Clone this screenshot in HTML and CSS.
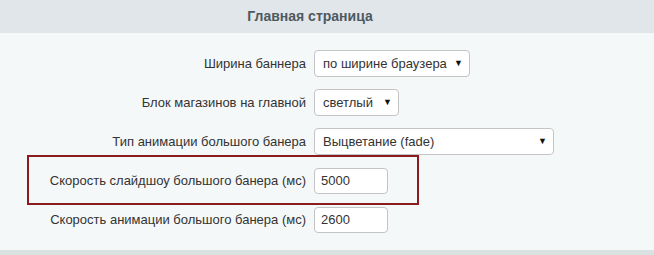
FILE: index.html
```html
<!DOCTYPE html>
<html lang="ru">
<head>
    <meta charset="UTF-8">
    <title>Главная страница</title>
    <link rel="stylesheet" href="styles.css">
</head>
<body>
    <div class="panel">
        <div class="panel-title">Главная страница</div>
        <div class="panel-body">
            <div class="row">
                <label class="row-label" for="banner-width">Ширина баннера</label>
                <div class="select-wrap w-156">
                    <select id="banner-width">
                        <option>по ширине браузера</option>
                    </select>
                    <span class="arrow">&#9660;</span>
                </div>
            </div>
            <div class="row">
                <label class="row-label" for="shops-block">Блок магазинов на главной</label>
                <div class="select-wrap w-85">
                    <select id="shops-block">
                        <option>светлый</option>
                    </select>
                    <span class="arrow">&#9660;</span>
                </div>
            </div>
            <div class="row">
                <label class="row-label" for="banner-anim">Тип анимации большого банера</label>
                <div class="select-wrap w-240">
                    <select id="banner-anim">
                        <option>Выцветание (fade)</option>
                    </select>
                    <span class="arrow">&#9660;</span>
                </div>
            </div>
            <!-- выделенная строка -->
            <div class="row highlight">
                <label class="row-label" for="slide-speed">Скорость слайдшоу большого банера (мс)</label>
                <input type="text" id="slide-speed" class="text-input" value="5000">
            </div>
            <div class="row">
                <label class="row-label" for="anim-speed">Скорость анимации большого банера (мс)</label>
                <input type="text" id="anim-speed" class="text-input" value="2600">
            </div>
        </div>
        <div class="panel-footer"></div>
    </div>
</body>
</html>
```

FILE: styles.css
```css
html, body {
    margin: 0;
    padding: 0;
}
body {
    background-color: #f5f8f9;
    color: #333;
    font-family: "Liberation Sans", Arial, sans-serif;
    font-size: 13px;
}
.panel-title {
    height: 33px;
    line-height: 33px;
    padding-right: 34px;
    background-color: #e1e6eb;
    color: #4e595f;
    font-weight: bold;
    font-size: 14px;
    text-align: center;
}
.panel-body {
    padding: 17px 0 17px 0;
    display: flex;
    flex-direction: column;
    gap: 12px;
}
.row {
    position: relative;
    display: flex;
    align-items: center;
    height: 27px;
}
.row-label {
    width: 314px;
    padding-right: 8px;
    text-align: right;
    box-sizing: border-box;
    flex-shrink: 0;
    font-size: 13px;
}
.highlight::before {
    content: "";
    position: absolute;
    left: 27px;
    top: -12px;
    width: 392px;
    height: 50px;
    border: 2px solid #8c1c1c;
    box-sizing: border-box;
}
.select-wrap {
    position: relative;
    height: 27px;
}
.select-wrap select {
    appearance: none;
    -webkit-appearance: none;
    width: 100%;
    height: 27px;
    padding: 0 16px 0 8px;
    border: 1px solid #c4c4c4;
    border-radius: 4px;
    background-color: #fff;
    color: #333;
    font-family: inherit;
    font-size: 13px;
    box-sizing: border-box;
}
.arrow {
    position: absolute;
    right: 7px;
    top: 8px;
    font-size: 9px;
    color: #111;
    pointer-events: none;
}
.w-156 { width: 156px; }
.w-85 { width: 85px; }
.w-240 { width: 240px; }
.text-input {
    width: 74px;
    height: 26px;
    padding: 0 6px;
    border: 1px solid #c4c4c4;
    border-radius: 4px;
    background-color: #fff;
    color: #333;
    font-family: inherit;
    font-size: 13px;
    box-sizing: border-box;
}
.panel-footer {
    height: 5px;
    background-color: #d9e1e1;
}
```
